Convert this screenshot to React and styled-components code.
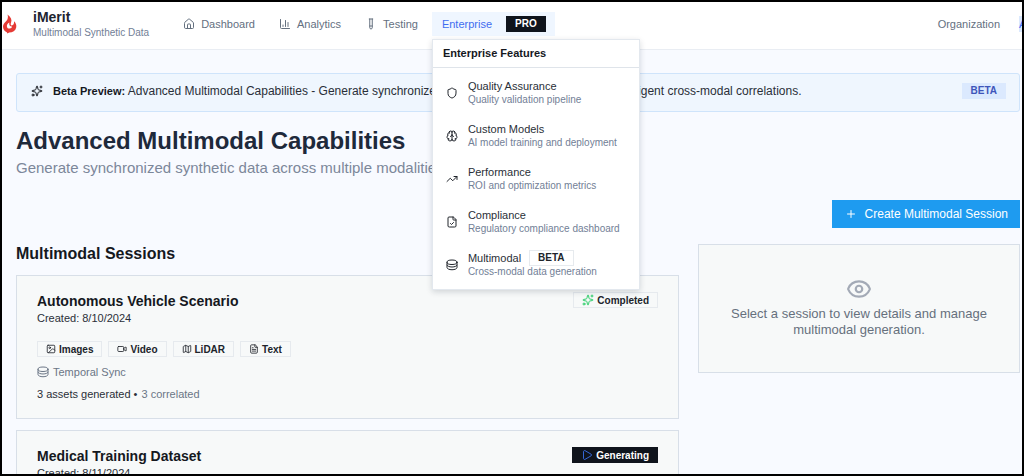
import React from "react";
import styled, { createGlobalStyle, css } from "styled-components";
import {
  House, ChartColumn, TestTube, Shield, Brain, TrendingUp, FileCheck,
  Sparkles, Image, Video, Map, FileText, Plus, Eye, Play,
} from "lucide-react";

const GlobalStyle = createGlobalStyle`
  *, *::before, *::after { box-sizing: border-box; }
  body { margin: 0; background: #000; font-family: "Liberation Sans", Arial, sans-serif; font-size: 11px; color: #15181e; }
  h1, h2, h3, p, ul { margin: 0; padding: 0; }
  ul { list-style: none; }
  a { color: inherit; text-decoration: none; }
  button { font: inherit; border: 0; cursor: pointer; }
  svg { flex: none; display: block; }
`;

const Frame = styled.div`
  height: 100vh;
  border: 2px solid #000;
  background: #f8faff;
  overflow: hidden;
`;

const Header = styled.header`
  display: flex;
  align-items: center;
  height: 48px;
  padding-bottom: 4px;
  background: #fff;
  border-bottom: 1px solid #e9edf3;
`;

const Brand = styled.a`
  display: flex;
  align-items: center;
  gap: 16px;
`;

const BrandName = styled.strong`
  display: block;
  font-size: 14px;
  line-height: 18px;
  color: #1e2430;
`;

const BrandNote = styled.span`
  display: block;
  font-size: 10px;
  line-height: 14px;
  color: #728096;
`;

const Nav = styled.nav`
  display: flex;
  align-items: center;
  gap: 4px;
  margin-left: 24px;
`;

const navItem = css`
  display: flex;
  align-items: center;
  height: 24px;
  color: #64707f;
`;

const NavLink = styled.a`
  ${navItem}
  gap: 6px;
  padding: 0 10px;
`;

const MenuAnchor = styled.div`
  position: relative;
`;

const MenuButton = styled.button`
  ${navItem}
  gap: 14px;
  padding: 0 9px 0 10px;
  background: #eff6ff;
  color: #3f6df0;
`;

const tones = {
  dark: css`background: #0f141c; color: #fff; border-color: #0f141c;`,
  blue: css`background: #dbe9fe; color: #3e55ba; border-color: #dbe9fe;`,
  outline: css`background: transparent; color: #20242b; border-color: #e6eaee;`,
};

const Badge = styled.span`
  display: inline-flex;
  align-items: center;
  gap: 3px;
  height: 16px;
  padding: 0 8px;
  border: 1px solid;
  font-size: 10px;
  font-weight: 700;
  white-space: nowrap;
  ${({ $tone }) => tones[$tone]}
`;

const Menu = styled.div`
  position: absolute;
  z-index: 2;
  top: 27px;
  left: 0;
  width: 208px;
  padding-bottom: 4px;
  background: #fff;
  border: 1px solid #e3e8ee;
  box-shadow: 0 2px 6px rgba(15, 23, 42, 0.16);
`;

const MenuTitle = styled.h2`
  padding: 0 10px;
  font-size: 11px;
  line-height: 27px;
  border-bottom: 1px solid #dfe4ea;
  margin-bottom: 2px;
`;

const MenuItem = styled.a`
  display: flex;
  align-items: center;
  gap: 10px;
  height: 43px;
  padding: 4px 14px 0 13px;
`;

const ItemName = styled.span`
  display: flex;
  align-items: center;
  gap: 8px;
  height: 14px;
  line-height: 14px;
  color: #2a2f38;
`;

const ItemNote = styled.span`
  display: block;
  font-size: 10px;
  line-height: 14px;
  color: #728096;
  white-space: nowrap;
`;

const Account = styled.div`
  display: flex;
  align-items: center;
  gap: 19px;
  margin-left: auto;
  margin-right: -21px;
  color: #64707f;
`;

const Avatar = styled.button`
  width: 24px;
  height: 16px;
  padding: 0;
  text-align: left;
  background: #dbe9fe;
  color: #3f6df0;
`;

const Main = styled.main`
  padding: 23px 2px 0 14px;
`;

const Banner = styled.section`
  display: flex;
  align-items: center;
  gap: 10px;
  height: 39px;
  padding: 0 13px 4px 14px;
  background: #eff6fe;
  border: 1px solid #cfe4fb;
  border-radius: 3px;
`;

const BannerText = styled.p`
  flex: 1;
  font-size: 12px;
  white-space: nowrap;
  color: #2a2f38;

  strong { font-size: 11px; color: #15181e; }
`;

const PageTitle = styled.h1`
  margin-top: 14px;
  font-size: 24px;
  line-height: 30px;
  color: #1e293b;
`;

const PageNote = styled.p`
  margin-top: 2px;
  font-size: 15px;
  line-height: 20px;
  color: #7c879a;
`;

const Actions = styled.div`
  display: flex;
  justify-content: flex-end;
  margin: 22px 0 16px;
`;

const CreateButton = styled.button`
  display: flex;
  align-items: center;
  gap: 8px;
  height: 28px;
  padding: 0 12px 0 13px;
  font-size: 12px;
  background: #1e9bf0;
  color: #fff;
`;

const Columns = styled.div`
  display: grid;
  grid-template-columns: repeat(3, 1fr);
  align-items: start;
  gap: 19px;
`;

const Sessions = styled.section`
  grid-column: span 2;
  display: flex;
  flex-direction: column;
  gap: 11px;
`;

const SectionTitle = styled.h2`
  font-size: 16px;
  line-height: 20px;
`;

const panel = css`
  background: #f7f9f9;
  border: 1px solid #d8dfe8;
`;

const Card = styled.article`
  ${panel}
  padding: 16px 20px;
`;

const CardHead = styled.div`
  display: flex;
  justify-content: space-between;
  align-items: flex-start;
`;

const CardTitle = styled.h3`
  font-size: 14px;
  line-height: 18px;
`;

const Line = styled.p`
  display: flex;
  align-items: center;
  gap: 4px;
  line-height: 16px;
  color: ${({ $muted }) => ($muted ? "#6b7686" : "#2a2f38")};

  span { color: #6b7686; }
`;

const Tags = styled.ul`
  display: flex;
  gap: 6px;
  margin: 15px 0 7px;

  li { display: flex; }
`;

const Stats = styled(Line)`
  margin-top: 6px;
`;

const EmptyPanel = styled.aside`
  ${panel}
  display: flex;
  flex-direction: column;
  align-items: center;
  gap: 4px;
  padding: 31px 24px 34px;
  font-size: 13px;
  line-height: 16px;
  text-align: center;
  color: #66707d;
`;

const features = [
  { name: "Quality Assurance", note: "Quality validation pipeline", Icon: Shield },
  { name: "Custom Models", note: "AI model training and deployment", Icon: Brain },
  { name: "Performance", note: "ROI and optimization metrics", Icon: TrendingUp },
  { name: "Compliance", note: "Regulatory compliance dashboard", Icon: FileCheck },
  { name: "Multimodal", note: "Cross-modal data generation", Icon: StackIcon, beta: true },
];

const modalities = [
  { name: "Images", Icon: Image },
  { name: "Video", Icon: Video },
  { name: "LiDAR", Icon: Map },
  { name: "Text", Icon: FileText },
];

function StackIcon({ size = 12, color = "currentColor" }) {
  return (
    <svg width={size} height={size} viewBox="0 0 24 24" fill="none" stroke={color} strokeWidth="2" strokeLinecap="round" strokeLinejoin="round" aria-hidden="true">
      <ellipse cx="12" cy="6.5" rx="10" ry="4.5" />
      <path d="M2 6.500v5c0 2.500 4.500 4.500 10 4.500s10-2 10-4.500v-5M2 12v5c0 2.500 4.500 4.500 10 4.500s10-2 10-4.500v-5" />
    </svg>
  );
}

function Flame() {
  return (
    <svg width="15" height="20" viewBox="0 0 15 20" aria-hidden="true">
      <path
        fill="#e53a35"
        d="M5.500.4C9 2.800 10.200 5.700 9 8.800 8.400 10.300 8.700 11.400 9.800 11.400 11.400 11.400 12.300 9.700 12 7.300 13.900 9 14.700 11.200 14.200 13.500 13.500 16.800 10.700 18.400 7.200 18.600L5.400 19.600 4.800 18.300C2.300 17.300 1 15.200 1 12.600 1 9.900 2.700 8.600 4.300 6.900 5.900 5.200 6.400 3 5.500.4z"
      />
      <path fill="#fff" d="M7.300 8.600C5.600 9.700 4.700 11 4.900 12.400 5.100 13.900 6.300 14.700 7.700 14.600 9 14.500 9.900 13.700 10 12.600 8 12.700 6.900 11.100 7.300 8.600z" />
    </svg>
  );
}

function SessionCard({ title, created, status }) {
  return (
    <Card>
      <CardHead>
        <div>
          <CardTitle>{title}</CardTitle>
          <Line>Created: {created}</Line>
        </div>
        {status}
      </CardHead>
      <Tags>
        {modalities.map(({ name, Icon }) => (
          <li key={name}><Badge $tone="outline"><Icon size={10} />{name}</Badge></li>
        ))}
      </Tags>
      <Line $muted><StackIcon />Temporal Sync</Line>
      <Stats>3 assets generated • <span>3 correlated</span></Stats>
    </Card>
  );
}

export default function App() {
  return (
    <Frame>
      <GlobalStyle />
      <Header>
        <Brand href="#home">
          <Flame />
          <div>
            <BrandName>iMerit</BrandName>
            <BrandNote>Multimodal Synthetic Data</BrandNote>
          </div>
        </Brand>
        <Nav>
          <NavLink href="#dashboard"><House size={12} />Dashboard</NavLink>
          <NavLink href="#analytics"><ChartColumn size={12} />Analytics</NavLink>
          <NavLink href="#testing"><TestTube size={12} />Testing</NavLink>
          <MenuAnchor>
            <MenuButton aria-expanded="true">Enterprise <Badge $tone="dark">PRO</Badge></MenuButton>
            <Menu>
              <MenuTitle>Enterprise Features</MenuTitle>
              {features.map(({ name, note, Icon, beta }) => (
                <MenuItem key={name} href="#feature">
                  <Icon size={12} color="#20242b" />
                  <div>
                    <ItemName>{name}{beta && <Badge $tone="outline">BETA</Badge>}</ItemName>
                    <ItemNote>{note}</ItemNote>
                  </div>
                </MenuItem>
              ))}
            </Menu>
          </MenuAnchor>
        </Nav>
        <Account>
          <a href="#organization">Organization</a>
          <Avatar>A</Avatar>
        </Account>
      </Header>
      <Main>
        <Banner>
          <Sparkles size={12} />
          <BannerText>
            <strong>Beta Preview:</strong> Advanced Multimodal Capabilities - Generate synchronized multi-modal synthetic data with intelligent cross-modal correlations.
          </BannerText>
          <Badge $tone="blue">BETA</Badge>
        </Banner>
        <PageTitle>Advanced Multimodal Capabilities</PageTitle>
        <PageNote>Generate synchronized synthetic data across multiple modalities</PageNote>
        <Actions>
          <CreateButton><Plus size={12} />Create Multimodal Session</CreateButton>
        </Actions>
        <Columns>
          <Sessions>
            <SectionTitle>Multimodal Sessions</SectionTitle>
            <SessionCard
              title="Autonomous Vehicle Scenario"
              created="8/10/2024"
              status={<Badge $tone="outline"><Sparkles size={12} color="#2fce6b" />Completed</Badge>}
            />
            <SessionCard
              title="Medical Training Dataset"
              created="8/11/2024"
              status={<Badge $tone="dark"><Play size={12} color="#3467d6" />Generating</Badge>}
            />
          </Sessions>
          <EmptyPanel>
            <Eye size={26} color="#a3aab6" />
            <p>Select a session to view details and manage multimodal generation.</p>
          </EmptyPanel>
        </Columns>
      </Main>
    </Frame>
  );
}
